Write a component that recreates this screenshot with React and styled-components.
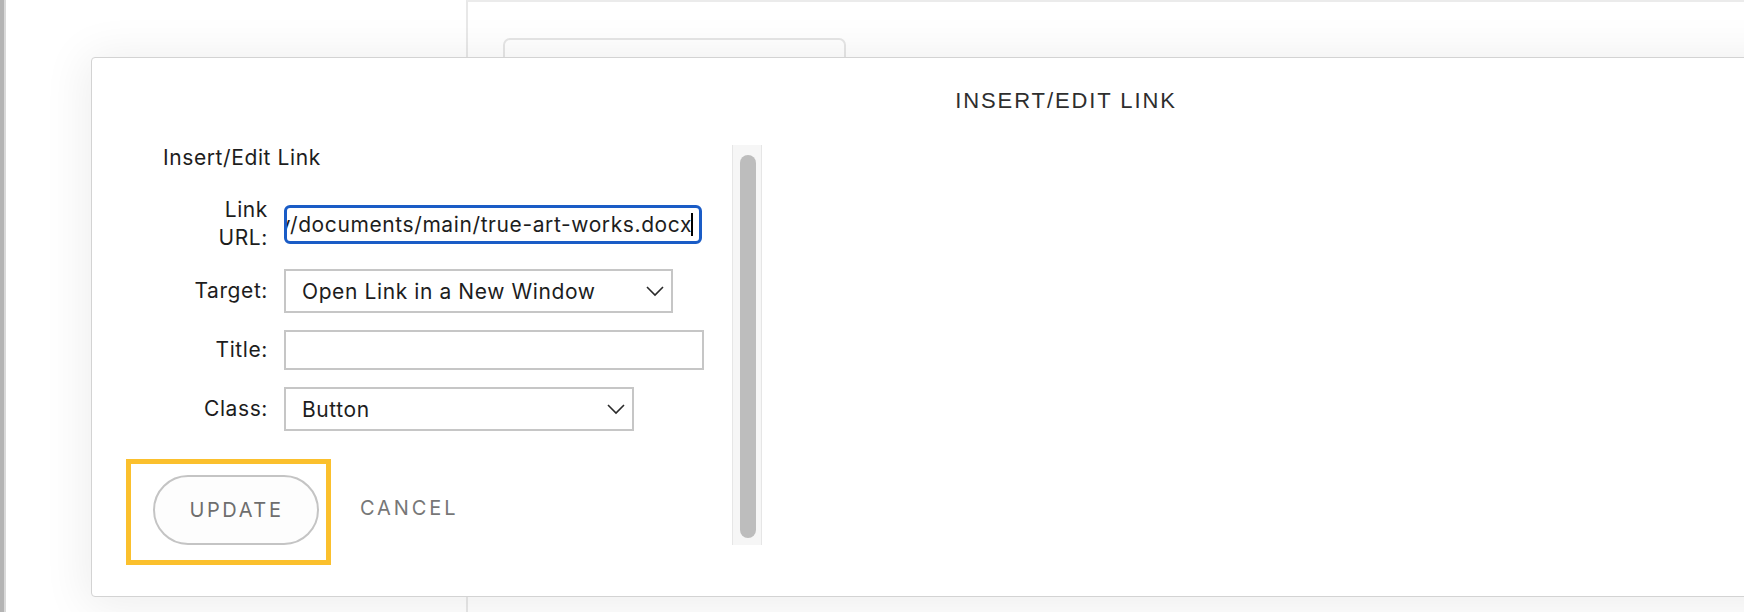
import React from "react";
import styled, { createGlobalStyle } from "styled-components";

const GlobalStyle = createGlobalStyle`
  html, body {
    margin: 0;
    padding: 0;
    background: #ffffff;
    overflow: hidden;
  }
  * {
    box-sizing: border-box;
  }
`;

const urlValue = "https://intranet.trueart.com/library/documents/main/true-art-works.docx";

const Page = styled.div`
  position: relative;
  display: flex;
  width: 1744px;
  height: 612px;
  overflow: hidden;
  background: #ffffff;
  font-family: Inter, "Open Sans", sans-serif;
`;

const SideRail = styled.div`
  flex: none;
  width: 6px;
  background: #b4b4b4;
  border-right: 2px solid #d9d9d9;
`;

const BackPanel = styled.div`
  flex: 1;
  margin-left: 460px;
  border-left: 2px solid #e8e8e8;
  border-top: 2px solid #ebebeb;
  padding: 36px 0 0 35px;
`;

const BackCard = styled.div`
  width: 343px;
  height: 80px;
  border: 2px solid #e6e6e6;
  border-radius: 7px;
`;

const Dialog = styled.div`
  position: absolute;
  left: 91px;
  top: 57px;
  width: 1950px;
  height: 540px;
  background: #ffffff;
  border: 1px solid #d3d3d3;
  border-radius: 4px;
  box-shadow: 0 4px 46px 6px rgba(0, 0, 0, 0.07);
  display: flex;
  flex-direction: column;
`;

const DialogHeader = styled.div`
  padding-top: 30px;
  height: 86px;
  text-align: center;
`;

const DialogTitle = styled.h2`
  margin: 0;
  font-family: "Liberation Sans", Arial, sans-serif;
  font-weight: 400;
  font-size: 22px;
  line-height: 26px;
  letter-spacing: 1.9px;
  color: #2e2e2e;
`;

const DialogBody = styled.div`
  display: flex;
  align-items: flex-start;
  padding-left: 34px;
`;

const FormColumn = styled.div`
  width: 606px;
  flex: none;
  letter-spacing: 0.6px;
`;

const FormHeading = styled.div`
  margin-left: 37px;
  font-size: 21px;
  line-height: 28px;
  color: #1d1d1d;
  margin-bottom: 24px;
`;

const FieldGrid = styled.div`
  display: grid;
  grid-template-columns: 85px auto;
  column-gap: 16px;
  row-gap: 17px;
  align-items: center;
  margin-left: 57px;
`;

const FieldLabel = styled.label`
  text-align: right;
  font-size: 21px;
  line-height: 28px;
  color: #1d1d1d;
`;

const UrlField = styled.div`
  display: flex;
  justify-content: flex-end;
  align-items: center;
  width: 418px;
  height: 39px;
  border: 3px solid #1a5cc6;
  border-radius: 6px;
  padding: 0 6px 0 4px;
  overflow: hidden;
  white-space: nowrap;
  font-size: 21px;
  color: #1d1d1d;
`;

const Caret = styled.span`
  flex: none;
  display: inline-block;
  width: 2px;
  height: 23px;
  margin-left: -1px;
  background: #000;
`;

const SelectBox = styled.div`
  display: flex;
  align-items: center;
  justify-content: space-between;
  width: ${(p) => p.$width}px;
  height: 44px;
  border: 2px solid #c6c6c6;
  padding: 0 6px 0 16px;
  font-size: 21px;
  color: #1d1d1d;
  background: #fff;
`;

const TextBox = styled.div`
  width: ${(p) => p.$width}px;
  height: 40px;
  border: 2px solid #c6c6c6;
  background: #fff;
`;

const ButtonRow = styled.div`
  display: flex;
  align-items: center;
  margin-top: 28px;
`;

const FocusRing = styled.div`
  border: 5px solid #fbc02d;
  padding: 11px 7px 15px 22px;
`;

const PillButton = styled.button`
  width: 166px;
  height: 70px;
  border: 2px solid #c4c4c4;
  border-radius: 35px;
  background: #fdfdfd;
  font-family: Inter, "Open Sans", sans-serif;
  font-size: 20px;
  letter-spacing: 2.6px;
  color: #6e6e6e;
  padding: 0 0 0 1px;
`;

const TextButton = styled.button`
  margin-left: 29px;
  margin-bottom: 8px;
  border: none;
  background: none;
  padding: 0;
  font-family: Inter, "Open Sans", sans-serif;
  font-size: 20px;
  letter-spacing: 2.9px;
  color: #777777;
`;

const ScrollTrack = styled.div`
  flex: none;
  margin-top: 1px;
  width: 30px;
  height: 400px;
  background: #f6f6f6;
  border-left: 1px solid #e6e6e6;
  border-right: 1px solid #e6e6e6;
  padding: 10px 5px 7px 7px;
`;

const ScrollThumb = styled.div`
  width: 16px;
  height: 100%;
  border-radius: 8px;
  background: #bdbdbd;
`;

const Chevron = () => (
  <svg width="20" height="12" viewBox="0 0 20 12" fill="none">
    <path d="M2 2 L10 10 L18 2" stroke="#2a2a2a" strokeWidth="1.6" />
  </svg>
);

export default function App() {
  return (
    <Page>
      <GlobalStyle />
      <SideRail />
      <BackPanel>
        <BackCard />
      </BackPanel>

      <Dialog>
        <DialogHeader>
          <DialogTitle>INSERT/EDIT LINK</DialogTitle>
        </DialogHeader>
        <DialogBody>
          <FormColumn>
            <FormHeading>Insert/Edit Link</FormHeading>
            <FieldGrid>
              <FieldLabel>Link URL:</FieldLabel>
              <UrlField>
                <span>{urlValue}</span>
                <Caret />
              </UrlField>

              <FieldLabel>Target:</FieldLabel>
              <SelectBox $width={389}>
                <span>Open Link in a New Window</span>
                <Chevron />
              </SelectBox>

              <FieldLabel>Title:</FieldLabel>
              <TextBox $width={420} />

              <FieldLabel>Class:</FieldLabel>
              <SelectBox $width={350}>
                <span>Button</span>
                <Chevron />
              </SelectBox>
            </FieldGrid>
            <ButtonRow>
              <FocusRing>
                <PillButton>UPDATE</PillButton>
              </FocusRing>
              <TextButton>CANCEL</TextButton>
            </ButtonRow>
          </FormColumn>
          <ScrollTrack>
            <ScrollThumb />
          </ScrollTrack>
        </DialogBody>
      </Dialog>
    </Page>
  );
}
